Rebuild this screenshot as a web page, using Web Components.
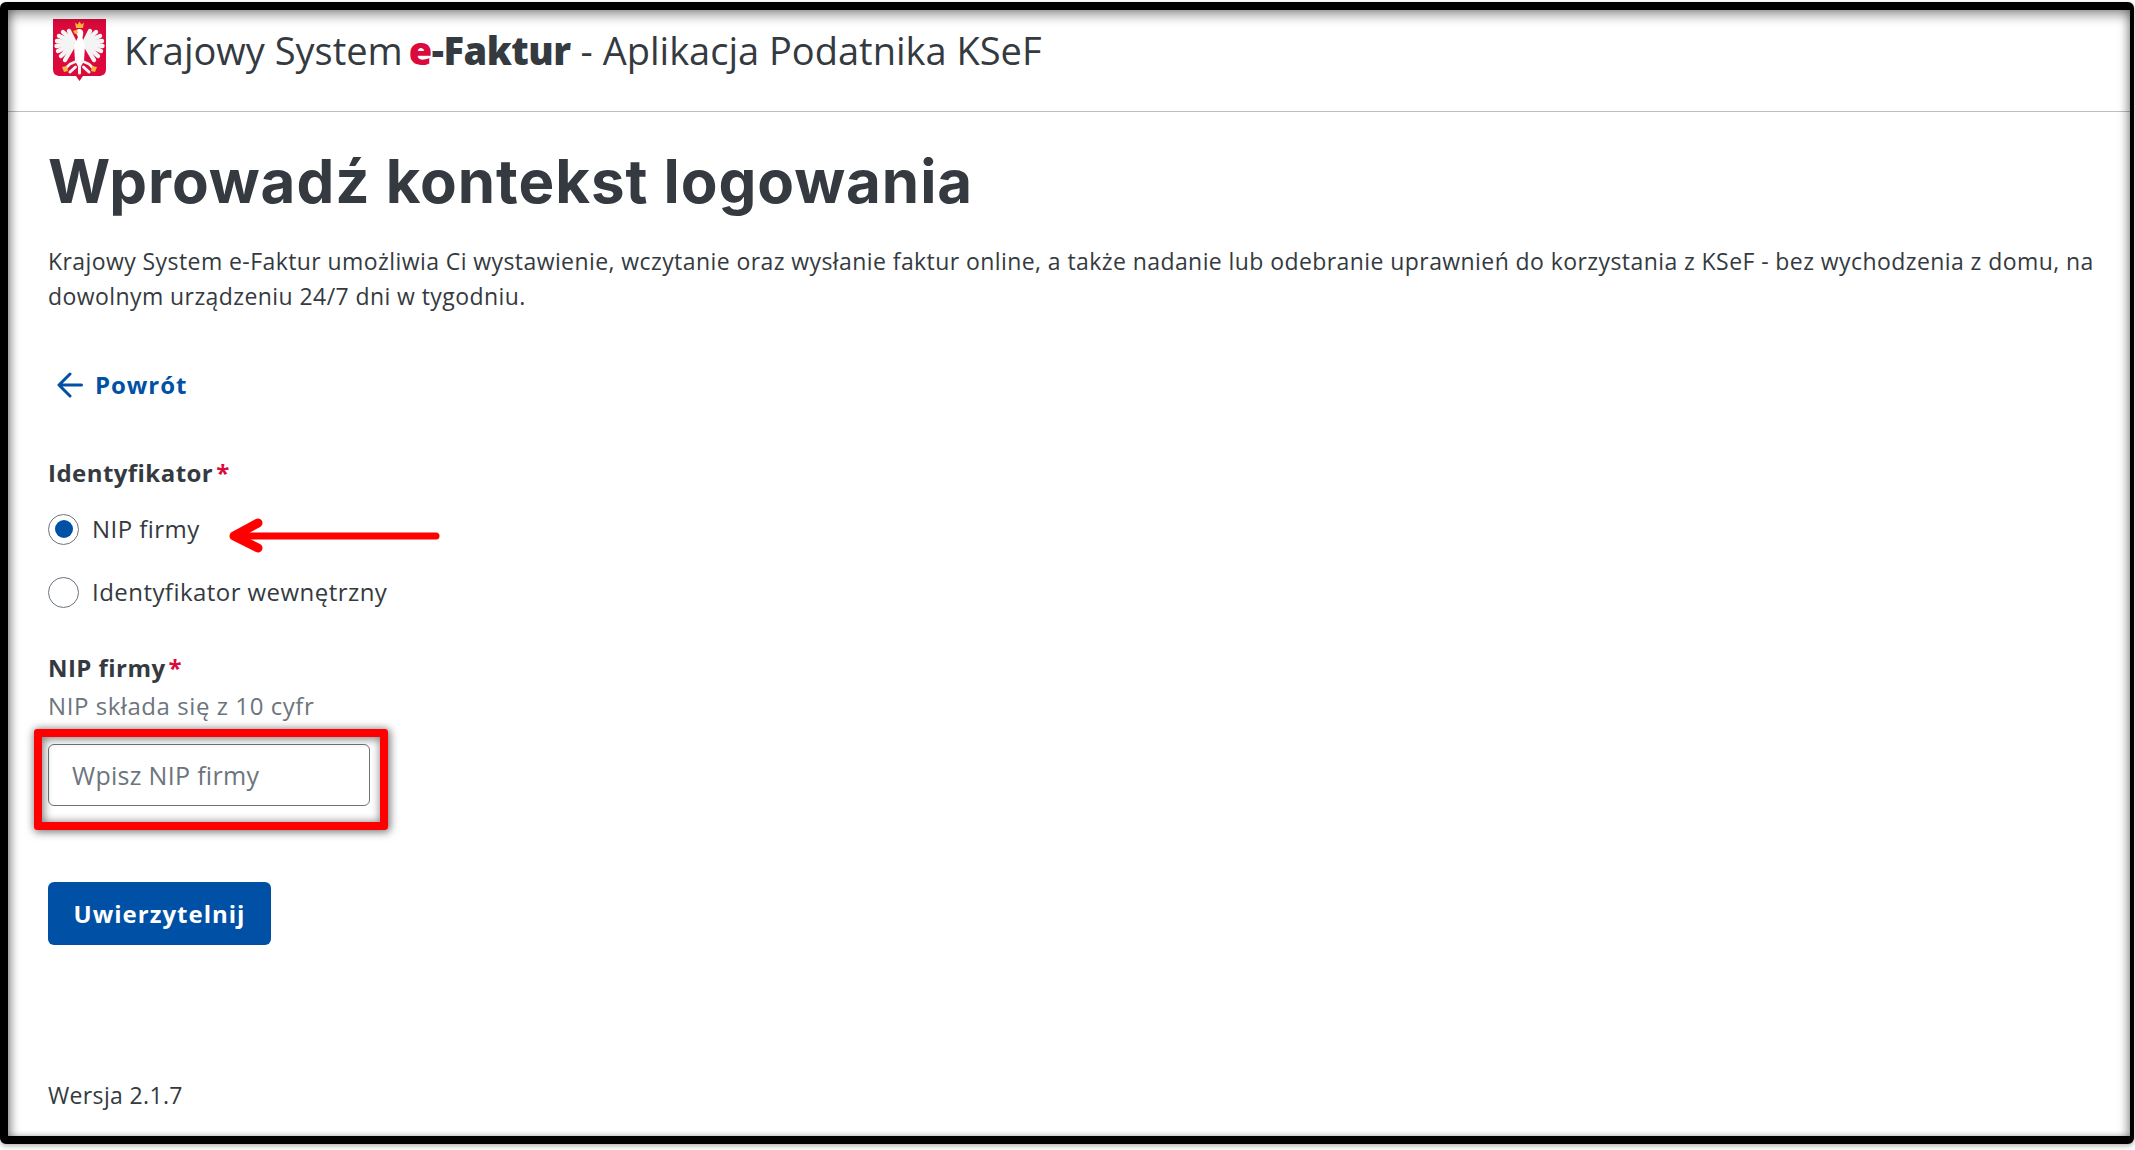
<!DOCTYPE html>
<html lang="pl">
<head>
<meta charset="utf-8">
<title>Krajowy System e-Faktur</title>
<style>
  html, body { margin: 0; background: #fff; }
  body { height: 1150px; overflow: hidden; color: #343a40; font-family: "Open Sans", "Noto Sans", sans-serif; }
</style>
</head>
<body>
<ksef-frame>
  <ksef-header slot="header"></ksef-header>

  <page-title>Wprowadź kontekst logowania</page-title>
  <page-lead>Krajowy System e-Faktur umożliwia Ci wystawienie, wczytanie oraz wysłanie faktur online, a także nadanie lub odebranie uprawnień do korzystania z KSeF - bez wychodzenia z domu, na dowolnym urządzeniu 24/7 dni w tygodniu.</page-lead>
  <back-link>Powrót</back-link>

  <field-label style="margin-top:54px;margin-bottom:23px">Identyfikator</field-label>
  <radio-option checked arrow>NIP firmy</radio-option>
  <radio-option>Identyfikator wewnętrzny</radio-option>

  <field-label style="margin-top:12px">NIP firmy</field-label>
  <field-hint>NIP składa się z 10 cyfr</field-hint>
  <text-box>Wpisz NIP firmy</text-box>
  <primary-button>Uwierzytelnij</primary-button>

  <span slot="footer">Wersja 2.1.7</span>
</ksef-frame>

<script>
class KsefFrame extends HTMLElement{
    connectedCallback(){
        const shadow = this.attachShadow({mode:'open'});
        shadow.innerHTML = `<style>
            :host { display: block; box-sizing: border-box; height: 1142px; margin-top: 2px; margin-right: 1px;
                border: 8px solid #000; border-right-width: 4px; border-radius: 6px; background: #fff;
                box-shadow: 0 2px 5px rgba(0,0,0,.3); position: relative; }
            .wrap { height: 100%; display: flex; flex-direction: column; }
            main { flex: 1; padding: 0 40px; display: flex; flex-direction: column; align-items: flex-start; }
            footer { padding: 0 40px 26px; font-size: 23px; letter-spacing: .35px; line-height: 30px; color: #343a40; }
            /* cien od ramki, lezy nad trescia */
            .inner { position: absolute; inset: 0; pointer-events: none;
                box-shadow: inset 0 9px 11px -3px rgba(0,0,0,.36), inset 8px 0 9px -4px rgba(0,0,0,.32), inset -8px 0 9px -4px rgba(0,0,0,.26), inset 0 -3px 6px -3px rgba(0,0,0,.2); }
        </style>
        <div class="wrap">
            <slot name="header"></slot>
            <main><slot></slot></main>
            <footer><slot name="footer"></slot></footer>
        </div>
        <div class="inner"></div>`;
    }
}
customElements.define('ksef-frame', KsefFrame);

class KsefHeader extends HTMLElement{
    connectedCallback(){
        const shadow = this.attachShadow({mode:'open'});
        shadow.innerHTML = `<style>
            :host { display: flex; box-sizing: border-box; height: 102px; padding: 9px 0 0 45px; gap: 18px;
                border-bottom: 1px solid #bdbdbd; align-items: flex-start; }
            .name { font-size: 38px; line-height: 56px; margin-top: 3px; color: #343a40; font-weight: 400; white-space: pre; }
            b { font-weight: 800; margin-left: 6px; letter-spacing: -.45px; }
            i { font-style: normal; color: #dc0a3c; }
        </style>
        <ksef-logo></ksef-logo>
        <div class="name">Krajowy System<b><i>e</i>-Faktur</b> - Aplikacja Podatnika KSeF</div>`;
    }
}
customElements.define('ksef-header', KsefHeader);

class KsefLogo extends HTMLElement{
    connectedCallback(){
        const shadow = this.attachShadow({mode:'open'});
        const wing = (attr) => {
            const tips = [[16,12],[10,13],[6,17],[4,22],[3.5,27],[5,32],[8,37],[12,41]];
            let out = '';
            tips.forEach((t) => {
                out += `<path d="M22 24L${t[0]} ${t[1]}" stroke="#f4f4f4" stroke-width="4.4" stroke-linecap="round"/>`;
            });
            return `<g ${attr}>${out}</g>`;
        };
        shadow.innerHTML = `<style>
            :host { display: block; width: 53px; height: 63px; flex: none; }
            svg { display: block; }
        </style>
        <svg width="53" height="63" viewBox="0 0 53 63">
            <path d="M0 0H53V50C53 55 50 57 46 57H30L26.5 62L23 57H7C3 57 0 55 0 50Z" fill="#dc0a3c"/>
            ${wing('')}
            ${wing('transform="translate(53 0) scale(-1 1)"')}
            <path d="M23 13C23 10 27 9 29 11C31 13 30 16 29.5 19L32 27L31 42L26.5 50L22 42L21 27L25 18L23.5 15Z" fill="#fff"/>
            <path d="M20 12L24 10.5L25 14L22 15Z" fill="#f6b93b"/>
            <path d="M23 9L22 3.5L24.5 5.5L26.5 2.5L28.5 5.5L31 3.5L30 9Z" fill="#f6b93b"/>
            <path d="M24 42L17 45L13 49M29 42L36 45L40 49" stroke="#f4f4f4" stroke-width="2.6" fill="none" stroke-linecap="round"/>
            <path d="M26.5 46V54M22.5 48L17 53M30.5 48L36 53" stroke="#f4f4f4" stroke-width="3" fill="none" stroke-linecap="round"/>
            <path d="M9 48l5-1 1 5-4 1zM44 48l-5-1-1 5 4 1z" fill="#f6b93b"/>
        </svg>`;
    }
}
customElements.define('ksef-logo', KsefLogo);

class PageTitle extends HTMLElement{
    connectedCallback(){
        const shadow = this.attachShadow({mode:'open'});
        shadow.innerHTML = `<style>
            :host { display: block; margin-top: 29px; font-family: Inter, "Open Sans", sans-serif; font-size: 60px; line-height: 80px;
                font-weight: 700; color: #343a40; white-space: nowrap; letter-spacing: .95px; }
        </style><slot></slot>`;
    }
}
customElements.define('page-title', PageTitle);

class PageLead extends HTMLElement{
    connectedCallback(){
        const shadow = this.attachShadow({mode:'open'});
        shadow.innerHTML = `<style>
            :host { display: block; margin-top: 23px; font-size: 23px; letter-spacing: .42px; line-height: 35px; color: #343a40; width: 2060px; }
        </style><slot></slot>`;
    }
}
customElements.define('page-lead', PageLead);

class BackLink extends HTMLElement{
    connectedCallback(){
        const shadow = this.attachShadow({mode:'open'});
        shadow.innerHTML = `<style>
            :host { display: flex; align-items: center; gap: 12px; margin-top: 54px; padding-left: 9px;
                font-size: 24px; letter-spacing: .95px; line-height: 34px; font-weight: 700; color: #0051a5; }
            svg { display: block; }
        </style>
        <svg width="26" height="26" viewBox="0 0 26 26" fill="none" stroke="#0051a5" stroke-width="3" stroke-linecap="round" stroke-linejoin="round">
            <path d="M24.5 13H2M13 2L2 13L13 24"/>
        </svg>
        <span><slot></slot></span>`;
    }
}
customElements.define('back-link', BackLink);

class FieldLabel extends HTMLElement{
    connectedCallback(){
        const shadow = this.attachShadow({mode:'open'});
        shadow.innerHTML = `<style>
            :host { display: block; font-size: 24px; letter-spacing: .45px; line-height: 34px; font-weight: 700; color: #343a40; }
            span { color: #dc0a3c; margin-left: 3px; }
        </style><slot></slot><span>*</span>`;
    }
}
customElements.define('field-label', FieldLabel);

class FieldHint extends HTMLElement{
    connectedCallback(){
        const shadow = this.attachShadow({mode:'open'});
        shadow.innerHTML = `<style>
            :host { display: block; margin-top: 4px; font-size: 24px; letter-spacing: .56px; line-height: 34px; color: #6c757d; }
        </style><slot></slot>`;
    }
}
customElements.define('field-hint', FieldHint);

class RadioOption extends HTMLElement{
    connectedCallback(){
        const shadow = this.attachShadow({mode:'open'});
        const dot = this.hasAttribute('checked') ? '<i></i>' : '';
        const arrow = this.hasAttribute('arrow') ? `
            <svg class="arrow" width="226" height="44" viewBox="0 0 226 44" fill="none" stroke="#f00" stroke-linecap="round" stroke-linejoin="round">
                <path d="M6 22H208" stroke-width="7"/>
                <path d="M30 9L6 22L30 34" stroke-width="9"/>
            </svg>` : '';
        shadow.innerHTML = `<style>
            :host { display: flex; align-items: center; gap: 13px; height: 32px; margin-bottom: 31px; position: relative;
                font-size: 24px; letter-spacing: .45px; line-height: 32px; color: #343a40; }
            .dot { box-sizing: border-box; width: 31px; height: 31px; border: 1px solid #6c757d; border-radius: 50%;
                display: flex; align-items: center; justify-content: center; background: #fff; }
            i { width: 18px; height: 18px; border-radius: 50%; background: #0051a5; }
            .arrow { position: absolute; left: 180px; top: 1px; }
        </style>
        <div class="dot">${dot}</div><span><slot></slot></span>${arrow}`;
    }
}
customElements.define('radio-option', RadioOption);

class TextBox extends HTMLElement{
    connectedCallback(){
        const shadow = this.attachShadow({mode:'open'});
        shadow.innerHTML = `<style>
            :host { display: flex; box-sizing: border-box; align-items: center; position: relative; width: 322px; height: 62px; margin-top: 21px;
                border: 1px solid #6c757d; border-radius: 6px; padding: 0 23px; font-size: 25px; letter-spacing: .3px; color: #6c757d; }
            .mark { position: absolute; left: -15px; top: -16px; width: 354px; height: 101px; box-sizing: border-box;
                border: 8px solid #f00; border-radius: 3px; box-shadow: 1px 1px 8px 1px rgba(0,0,0,.55), inset 1px 1px 8px 1px rgba(0,0,0,.5); }
        </style>
        <slot></slot><div class="mark"></div>`;
    }
}
customElements.define('text-box', TextBox);

class PrimaryButton extends HTMLElement{
    connectedCallback(){
        const shadow = this.attachShadow({mode:'open'});
        shadow.innerHTML = `<style>
            :host { display: flex; box-sizing: border-box; align-items: center; justify-content: center; width: 223px; height: 63px; margin-top: 76px;
                border-radius: 6px; background: #0051a5; color: #fff; font-size: 24px; letter-spacing: 1px; font-weight: 700; }
        </style><slot></slot>`;
    }
}
customElements.define('primary-button', PrimaryButton);
</script>
</body>
</html>
